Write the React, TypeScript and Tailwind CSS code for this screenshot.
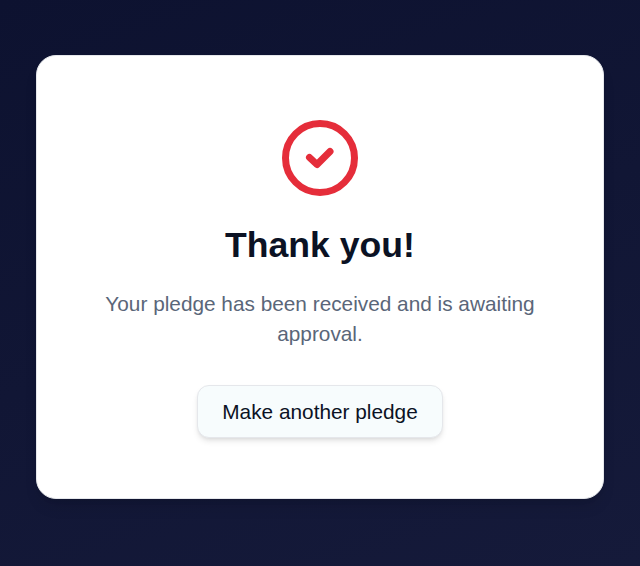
export default function App() {
  return (
    <div className="min-h-[566px] bg-[linear-gradient(160deg,#0d1230,#151a3a)] px-9 pt-[55px] font-['Liberation_Sans',sans-serif]">
      <div className="flex h-[444px] flex-col items-center rounded-[20px] border border-[#e5e7eb] bg-white px-16 pt-16 text-center shadow-lg">
        <svg width="76" height="76" viewBox="0 0 76 76" fill="none" className="shrink-0">
          <circle cx="38" cy="38" r="34.5" stroke="#e52d3a" strokeWidth="7" />
          <path d="M27.5 37.5 L35 44.5 L48 31.5" stroke="#e52d3a" strokeWidth="7" strokeLinecap="round" strokeLinejoin="round" />
        </svg>
        <h1 className="mt-7 text-[35.6px] leading-[42px] font-bold text-[#0b1224]">Thank you!</h1>
        <p className="mt-[23px] text-[20.8px] leading-[30px] text-[#5a6679]">
          Your pledge has been received and is awaiting approval.
        </p>
        <button
          type="button"
          className="mt-9 h-[53px] w-[246px] rounded-xl border border-[#e5e7eb] bg-[#f7fcfd] text-[20.8px] text-[#0b1224] shadow-md"
        >
          Make another pledge
        </button>
      </div>
    </div>
  );
}
